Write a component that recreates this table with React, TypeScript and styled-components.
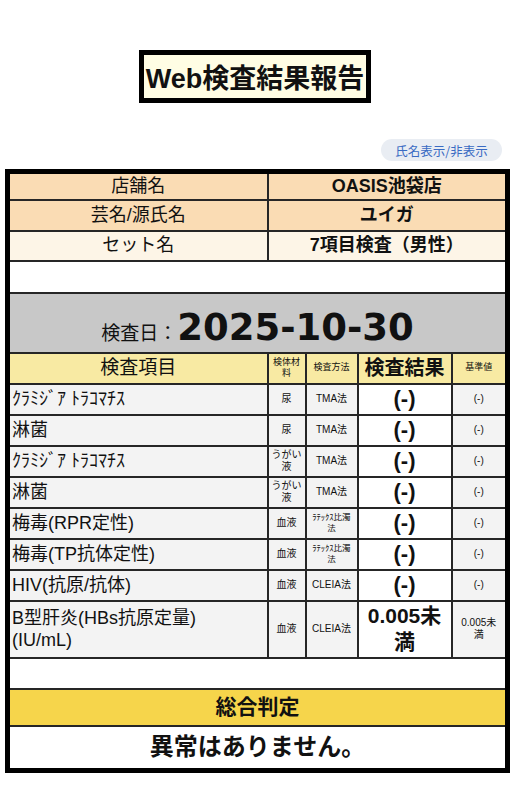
import React from 'react';
import styled, { createGlobalStyle } from 'styled-components';

const Global = createGlobalStyle`
  html, body { margin: 0; padding: 0; background: #fff; }
  body {
    font-family: "Liberation Sans", "Noto Sans CJK JP", sans-serif;
    color: #111;
  }
`;

const Page = styled.div`
  width: 510px;
  box-sizing: border-box;
  padding: 50px 5px 0;
`;

const TitleRow = styled.div`
  display: flex;
  justify-content: center;
`;

const Title = styled.h1`
  margin: 0;
  width: 232px;
  height: 53px;
  box-sizing: border-box;
  border: 5px solid #000;
  background: #fffde4;
  display: flex;
  align-items: center;
  justify-content: center;
  font-size: 27px;
  font-weight: 700;
  white-space: nowrap;
`;

const ToggleRow = styled.div`
  display: flex;
  justify-content: flex-end;
  margin-top: 36px;
  padding-right: 3px;
`;

const ToggleButton = styled.button`
  width: 121px;
  height: 22px;
  padding: 0;
  border: none;
  border-radius: 11px;
  background: #e9edf3;
  color: #3a6bc3;
  font-family: "Noto Sans CJK JP", sans-serif;
  font-size: 12.5px;
`;

const Report = styled.table`
  margin-top: 8px;
  width: 500px;
  table-layout: fixed;
  border-collapse: collapse;
  border: 5px solid #000;
`;

const Cell = styled.td<{ $h?: number; $bg?: string; $size?: number; $bold?: boolean; $left?: boolean }>`
  border: 2px solid #262626;
  padding: 0 2px;
  height: ${(p) => p.$h ?? 31}px;
  background: ${(p) => p.$bg ?? '#fff'};
  font-size: ${(p) => p.$size ?? 17}px;
  font-weight: ${(p) => (p.$bold ? 700 : 400)};
  text-align: ${(p) => (p.$left ? 'left' : 'center')};
  line-height: 1.25;
  vertical-align: middle;
  box-sizing: border-box;
`;

const DateCell = styled.td`
  border: 2px solid #262626;
  height: 55px;
  background: #c8c8c8;
  text-align: center;
  vertical-align: bottom;
  padding: 0 0 3px;
  white-space: nowrap;
`;

const DateLabel = styled.span`
  font-family: "Noto Sans CJK JP", sans-serif;
  font-size: 19px;
`;

const DateValue = styled.span`
  font-family: "DejaVu Sans", sans-serif;
  font-size: 37px;
  font-weight: 700;
  line-height: 1.1;
`;

const Col = styled.col<{ $w: number }>`
  width: ${(p) => p.$w}px;
`;

const PEACH = '#fadcb4';
const CREAM = '#fdf5e7';
const HEAD = '#f8eaa3';
const ROW = '#f3f3f3';
const GOLD = '#f6d54b';

type Item = {
  name: React.ReactNode;
  sample: string;
  method: string;
  methodSize?: number;
  result: React.ReactNode;
  resultSize?: number;
  range: React.ReactNode;
  h?: number;
};

const items: Item[] = [
  { name: 'ｸﾗﾐｼﾞｱ ﾄﾗｺﾏﾁｽ', sample: '尿', method: 'TMA法', result: '(-)', range: '(-)' },
  { name: '淋菌', sample: '尿', method: 'TMA法', result: '(-)', range: '(-)' },
  { name: 'ｸﾗﾐｼﾞｱ ﾄﾗｺﾏﾁｽ', sample: 'うがい液', method: 'TMA法', result: '(-)', range: '(-)' },
  { name: '淋菌', sample: 'うがい液', method: 'TMA法', result: '(-)', range: '(-)' },
  { name: '梅毒(RPR定性)', sample: '血液', method: 'ﾗﾃｯｸｽ比濁法', methodSize: 8.5, result: '(-)', range: '(-)' },
  { name: '梅毒(TP抗体定性)', sample: '血液', method: 'ﾗﾃｯｸｽ比濁法', methodSize: 8.5, result: '(-)', range: '(-)' },
  { name: 'HIV(抗原/抗体)', sample: '血液', method: 'CLEIA法', result: '(-)', range: '(-)' },
  {
    name: (
      <>
        B型肝炎(HBs抗原定量)
        <br />
        (IU/mL)
      </>
    ),
    sample: '血液',
    method: 'CLEIA法',
    result: (
      <>
        0.005未
        <br />満
      </>
    ),
    resultSize: 21,
    range: (
      <>
        0.005未
        <br />満
      </>
    ),
    h: 57,
  },
];

export default function App() {
  return (
    <Page>
      <Global />
      <TitleRow>
        <Title>Web検査結果報告</Title>
      </TitleRow>
      <ToggleRow>
        <ToggleButton type="button">氏名表示/非表示</ToggleButton>
      </ToggleRow>
      <Report>
        <colgroup>
          <Col $w={260} />
          <Col $w={38} />
          <Col $w={52} />
          <Col $w={94} />
          <Col $w={56} />
        </colgroup>
        <tbody>
          <tr>
            <Cell $h={28} $bg={PEACH} $size={18}>店舗名</Cell>
            <Cell $h={28} $bg={PEACH} $size={18} $bold colSpan={4}>OASIS池袋店</Cell>
          </tr>
          <tr>
            <Cell $h={31} $bg={PEACH} $size={18}>芸名/源氏名</Cell>
            <Cell $h={31} $bg={PEACH} $size={18} $bold colSpan={4}>ユイガ</Cell>
          </tr>
          <tr>
            <Cell $h={30} $bg={CREAM} $size={18}>セット名</Cell>
            <Cell $h={30} $bg={CREAM} $size={18} $bold colSpan={4}>7項目検査（男性）</Cell>
          </tr>
          <tr>
            <Cell $h={32} colSpan={5} />
          </tr>
          <tr>
            <DateCell colSpan={5}>
              <DateLabel>検査日：</DateLabel>
              <DateValue>2025-10-30</DateValue>
            </DateCell>
          </tr>
          <tr>
            <Cell $bg={HEAD} $size={19}>検査項目</Cell>
            <Cell $bg={HEAD} $size={9}>検体材料</Cell>
            <Cell $bg={HEAD} $size={9}>検査方法</Cell>
            <Cell $bg={HEAD} $size={20} $bold>検査結果</Cell>
            <Cell $bg={HEAD} $size={9}>基準値</Cell>
          </tr>
          {items.map((it, i) => (
            <tr key={i}>
              <Cell $h={it.h} $bg={ROW} $size={18} $left>{it.name}</Cell>
              <Cell $h={it.h} $bg={ROW} $size={10}>{it.sample}</Cell>
              <Cell $h={it.h} $bg={ROW} $size={it.methodSize ?? 10}>{it.method}</Cell>
              <Cell $h={it.h} $size={it.resultSize ?? 22} $bold>{it.result}</Cell>
              <Cell $h={it.h} $bg={ROW} $size={10}>{it.range}</Cell>
            </tr>
          ))}
          <tr>
            <Cell $h={31} colSpan={5} />
          </tr>
          <tr>
            <Cell $h={37} $bg={GOLD} $size={21} $bold colSpan={5}>総合判定</Cell>
          </tr>
          <tr>
            <Cell $h={45} $size={24} $bold colSpan={5}>異常はありません。</Cell>
          </tr>
        </tbody>
      </Report>
    </Page>
  );
}
